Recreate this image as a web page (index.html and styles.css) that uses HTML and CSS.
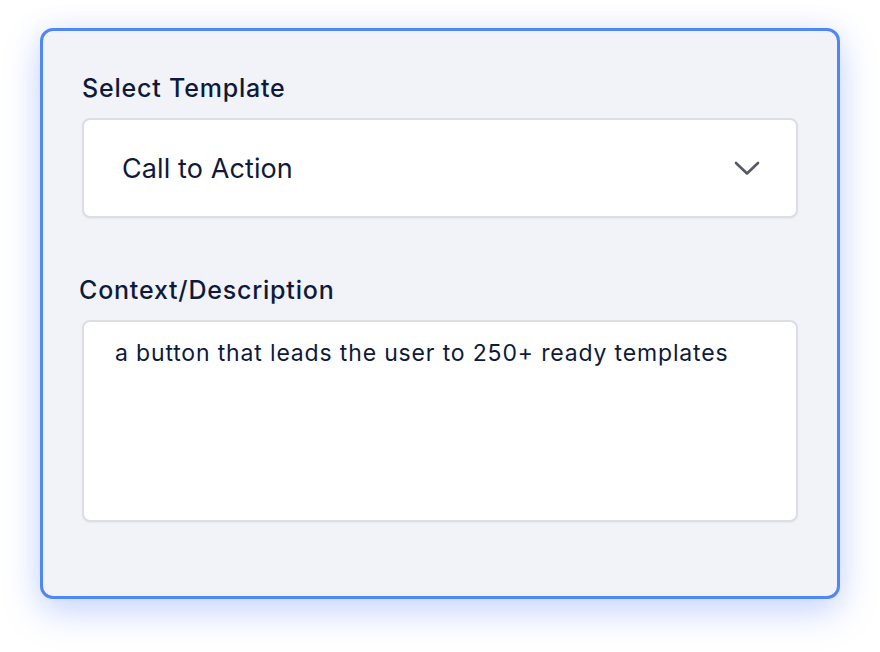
FILE: index.html
```html
<!DOCTYPE html>
<html>
<head>
<meta charset="utf-8">
<link rel="stylesheet" href="styles.css">
</head>
<body>
<div class="card">
  <div class="field">
    <div class="label">Select Template</div>
    <div class="select">
      <span class="select-value">Call to Action</span>
      <svg class="chevron" width="26" height="15" viewBox="0 0 26 15"><path d="M2 2 L13 12.5 L24 2" fill="none" stroke="#555964" stroke-width="2.6" stroke-linecap="round" stroke-linejoin="round"/></svg>
    </div>
  </div>
  <div class="field field-desc">
    <div class="label label-desc">Context/Description</div>
    <div class="textarea">a button that leads the user to 250+ ready templates</div>
  </div>
</div>
</body>
</html>
```
FILE: styles.css
```css
html, body {
  margin: 0;
  padding: 0;
  background: #ffffff;
}
body {
  box-sizing: border-box;
  min-height: 652px;
  font-family: Inter, "Noto Sans", sans-serif;
  color: #0f1a3a;
  padding: 28px 40px 0 40px;
}
.card {
  box-sizing: border-box;
  width: 800px;
  height: 571px;
  background: #f1f3f8;
  border: 3px solid #4f87f8;
  border-radius: 13px;
  box-shadow: 0 14px 36px rgba(90, 130, 250, 0.28), 0 0 26px rgba(90, 130, 250, 0.12);
  padding: 38px 39px 0 39px;
}
.label {
  font-size: 25px;
  font-weight: 500;
  letter-spacing: 0.8px;
  line-height: 38px;
  margin-bottom: 11px;
}
.label-desc {
  margin-left: -3px;
}
.select {
  box-sizing: border-box;
  height: 100px;
  background: #ffffff;
  border: 2px solid #dcdee3;
  border-radius: 8px;
  display: flex;
  align-items: center;
  justify-content: space-between;
  padding: 0 36px 0 38px;
  box-shadow: 0 1px 2px rgba(0,0,0,0.04);
}
.select-value {
  font-size: 27px;
  font-weight: 400;
  letter-spacing: 0.1px;
}
.chevron {
  display: block;
}
.field-desc {
  margin-top: 53px;
}
.textarea {
  box-sizing: border-box;
  height: 202px;
  background: #ffffff;
  border: 2px solid #dcdee3;
  border-radius: 8px;
  padding: 16px 31px;
  font-size: 23px;
  letter-spacing: 0.84px;
  line-height: 30px;
  box-shadow: 0 1px 2px rgba(0,0,0,0.04);
}
```
